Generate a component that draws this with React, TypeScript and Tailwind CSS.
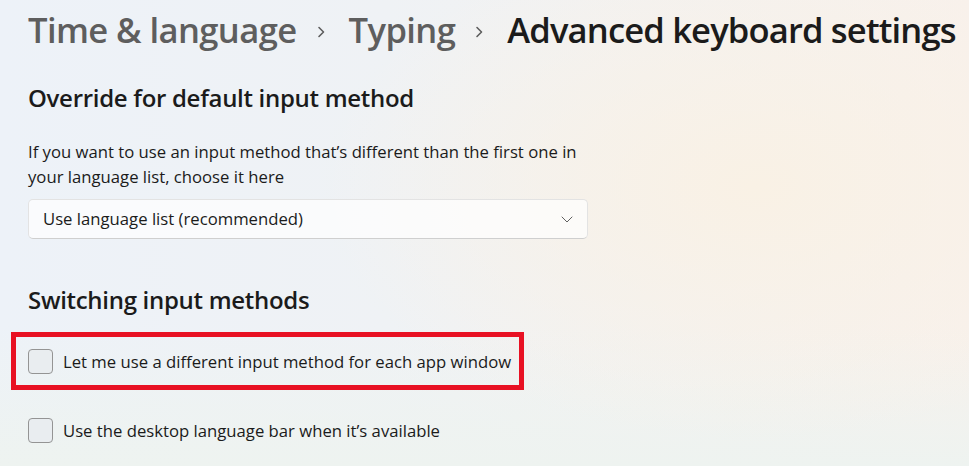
import React from "react";

function Chevron() {
  return (
    <svg width="10" height="12" viewBox="0 0 10 12" className="ml-[19px] mr-[23px] mt-[4px] shrink-0" aria-hidden>
      <path d="M3 1.5l4.5 4.5-4.5 4.5" fill="none" stroke="#5e5e5e" strokeWidth="1.6" strokeLinecap="round" strokeLinejoin="round" />
    </svg>
  );
}

function Checkbox({ label }: { label: string }) {
  return (
    <label className="flex h-[25px] items-center gap-[10px] whitespace-nowrap">
      <span className="h-[25px] w-[25px] shrink-0 rounded-[4px] border-[1.5px] border-[#949494] bg-[#e9edf0]" />
      <span className="text-[16.7px] leading-[25px] text-[#1b1b1b]">{label}</span>
    </label>
  );
}

export default function App() {
  return (
    <div className="h-[466px] w-full overflow-hidden bg-[radial-gradient(ellipse_45%_55%_at_78%_40%,#f9f1e5_0%,rgba(249,241,229,0)_100%),linear-gradient(180deg,rgba(238,243,240,0)_70%,#eef3f0_100%),linear-gradient(90deg,#edf2f8_0%,#eff2f5_40%,#f8f1ec_100%)] font-['Open_Sans','Noto_Sans',sans-serif]">
      <div className="px-[28px] pt-[6px]">
        {/* breadcrumb */}
        <div className="flex items-center whitespace-nowrap text-[34.6px] font-semibold leading-[48px] tracking-[-0.6px]">
          <span className="text-[#5e5e5e]">Time &amp; language</span>
          <Chevron />
          <span className="text-[#5e5e5e]">Typing</span>
          <Chevron />
          <span className="tracking-[-0.85px] text-[#1b1b1b]">Advanced keyboard settings</span>
        </div>

        <h2 className="mt-[27px] text-[24px] font-semibold leading-[34px] tracking-[-0.3px] text-[#1b1b1b]">
          Override for default input method
        </h2>
        <p className="mt-[24px] w-[560px] text-[16.7px] leading-[25px] text-[#1b1b1b]">
          If you want to use an input method that’s different than the first one in your language list, choose it here
        </p>

        <button className="mt-[10px] flex h-[40px] w-[560px] items-center justify-between rounded-[5px] border border-[#e3e3e3] border-b-[#cfcfcf] bg-white/70 pl-[14px] pr-[13px] text-left">
          <span className="text-[16.7px] text-[#1b1b1b]">Use language list (recommended)</span>
          <svg width="14" height="14" viewBox="0 0 14 14" aria-hidden>
            <path d="M2 5l5 5 5-5" fill="none" stroke="#606060" strokeWidth="1" strokeLinecap="round" strokeLinejoin="round" />
          </svg>
        </button>

        <h2 className="mt-[44px] text-[24px] font-semibold leading-[34px] tracking-[-0.3px] text-[#1b1b1b]">
          Switching input methods
        </h2>

        <div className="ml-[-17px] mt-[15px] flex h-[58px] w-[513px] items-center border-[5px] border-[#e81123] pl-[12px]">
          <Checkbox label="Let me use a different input method for each app window" />
        </div>

        <div className="mt-[28px]">
          <Checkbox label="Use the desktop language bar when it’s available" />
        </div>
      </div>
    </div>
  );
}
